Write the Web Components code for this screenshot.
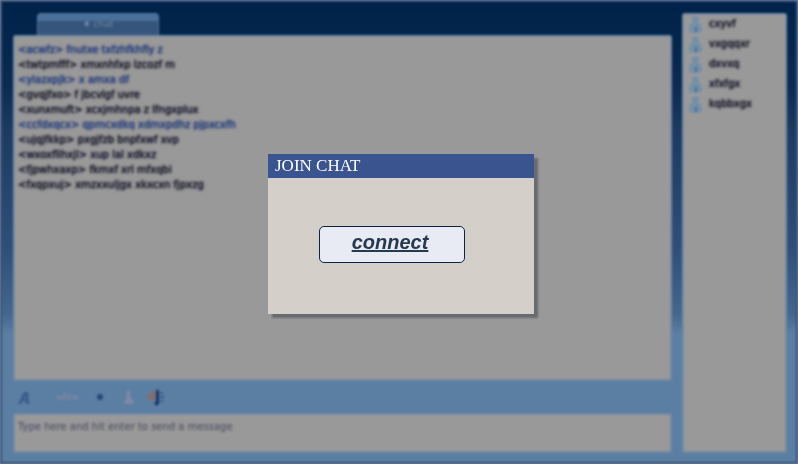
<!DOCTYPE html>
<html lang="en">
<head>
<meta charset="utf-8">
<title>Join chat</title>
<style>
  html, body { margin: 0; padding: 0; }
  body { width: 798px; height: 464px; overflow: hidden; font-family: "Liberation Sans", sans-serif; }
</style>
</head>
<body>
<chat-app>
  <chat-line slot="log" kind="own" who="acwfz">fnutxe txfzhfkhfly z</chat-line>
  <chat-line slot="log" who="twtpmfff">xmxnhfxp lzcozf m</chat-line>
  <chat-line slot="log" kind="own" who="ylazxpjk">x amxa df</chat-line>
  <chat-line slot="log" who="gvqjfxo">f jbcvlgf uvre</chat-line>
  <chat-line slot="log" who="xunxmuft">xcxjmhnpa z lfngxplux</chat-line>
  <chat-line slot="log" kind="own" who="ccfdxqcx">qpmcxdkq xdmxpdhz pjpxcxfh</chat-line>
  <chat-line slot="log" who="ujqjfkkp">pxgjfzb bnpfxwf xvp</chat-line>
  <chat-line slot="log" who="wxoxfllhxjl">xup lal xdkxz</chat-line>
  <chat-line slot="log" who="fjpwhxaxp">fkmxf xrl mfxqbi</chat-line>
  <chat-line slot="log" who="fxqpxuj">xmzxxuljgx xkxcxn fjpxzg</chat-line>
  <user-row slot="users">cxyvf</user-row>
  <user-row slot="users">vxgqqxr</user-row>
  <user-row slot="users">dxvxq</user-row>
  <user-row slot="users">xfxfgx</user-row>
  <user-row slot="users">kqbbxgx</user-row>
</chat-app>
<join-dialog heading="JOIN CHAT">connect</join-dialog>

<template id="app-tpl">
  <style>
    :host {
      display: grid;
      grid-template-columns: 659px 105px;
      grid-template-rows: 440px;
      column-gap: 10px;
      box-sizing: border-box;
      width: 798px;
      height: 464px;
      padding: 11px 9px 9px 11px;
      border: 2px solid #5889b1;
      background: linear-gradient(#003a61 0, #14486b 18%, #326185 28%, #5085b1 54%, #73add2 68%, #98d2f5 72%, #98d2f5 100%);
      filter: blur(1.2px);
    }
    .main { display: flex; flex-direction: column; min-height: 0; }
    .tab {
      align-self: flex-start;
      margin-left: 24px;
      box-sizing: border-box;
      width: 122px;
      height: 22px;
      border: 1px solid #86c0e6;
      border-bottom: 0;
      border-radius: 4px 4px 0 0;
      background: linear-gradient(#7bbbe4 0 7px, #5a8eb4 7px);
      color: #b8dcf5;
      font: 9px/21px "DejaVu Sans", sans-serif;
      text-align: center;
    }
    .panel {
      background: #ffffe6;
      border: 2px solid #c1e6f3;
      border-radius: 3px;
      box-sizing: border-box;
    }
    .log {
      height: 346px;
      padding: 5px 3px;
      display: flex;
      flex-direction: column;
    }
    .tools {
      height: 32px;
      display: flex;
      align-items: center;
      padding-left: 5px;
    }
    .tools .fmt { margin-left: 26px; width: 24px; color: #cfe4f5; font: bold 9px "DejaVu Sans", sans-serif; }
    .tools .dot { margin-left: 17px; width: 6px; height: 6px; border-radius: 50%; background: #3f78ae; }
    .tools svg { display: block; }
    .entry {
      height: 40px;
      padding: 5px 3px;
      color: #a8a8a8;
      font: 10px/14px "DejaVu Sans", sans-serif;
      text-shadow: 0 0 2px #a0a0a0;
    }
    .users { padding: 0 0 0 4px; display: flex; flex-direction: column; gap: 3px; }
  </style>
  <section class="main">
    <div class="tab">♦ chat</div>
    <div class="panel log"><slot name="log"></slot></div>
    <div class="tools">
      <svg width="12" height="13" viewBox="0 0 12 13" aria-hidden="true"><path d="M0 13 6 1h4l1 12H8V10H4.500L3 13zM5.500 8H8V5z" fill="#5f98c8"/></svg>
      <span class="fmt">nfxo</span>
      <span class="dot"></span>
      <svg style="margin-left:20px" width="12" height="16" viewBox="0 0 12 16" aria-hidden="true"><path d="M4 1h3v5l4 8-1 1H2l-1-1 3-8z" fill="#d3e2ff"/></svg>
      <svg style="margin-left:11px" width="18" height="19" viewBox="0 0 18 19" aria-hidden="true"><path d="M10 1 1 8l1 3 7 3z" fill="#d8b898"/><path d="M8 14h2V3l2-2 1 2v13l-3 2z" fill="#245a96"/><path d="M14 5h3M14 9h4M14 13h3" stroke="#245a96" stroke-width="1.200"/></svg>
    </div>
    <div class="panel entry">Type here and hit enter to send a message</div>
  </section>
  <aside class="panel users"><slot name="users"></slot></aside>
</template>

<template id="line-tpl">
  <style>
    :host {
      display: block;
      height: 15px;
      font: 10px/15px "DejaVu Sans", sans-serif;
      white-space: nowrap;
      color: #444;
      text-shadow: 0 0 2px #444, 0 0 3px #777;
    }
    :host([kind="own"]) { color: #3f7ee0; text-shadow: 0 0 2px #667, 0 0 3px #99a; }
  </style>
  <span class="who"></span> <slot></slot>
</template>

<template id="user-tpl">
  <style>
    :host {
      display: flex;
      align-items: center;
      gap: 6px;
      height: 17px;
      font: 10px "DejaVu Sans", sans-serif;
      color: #444;
      text-shadow: 0 0 2px #444, 0 0 3px #777;
    }
    svg { display: block; flex: none; }
  </style>
  <svg width="15" height="18" viewBox="0 0 15 18" aria-hidden="true">
    <circle cx="7.500" cy="4.500" r="3.500" fill="#c0f0ff"/>
    <path d="M1 15c0-5 2-8 6.500-8s6.500 3 6.500 8c0 2-3 3-6.500 3S1 17 1 15z" fill="#c0f0ff"/>
    <path d="M8 12v5" stroke="#6f9fd8" stroke-width="1.500"/>
  </svg>
  <slot></slot>
</template>

<template id="dialog-tpl">
  <style>
    :host {
      position: fixed;
      inset: 0;
      display: grid;
      place-items: center;
      padding: 4px 0 0 4px;
      background: rgba(0, 0, 40, .4);
    }
    .box {
      width: 266px;
      height: 160px;
      display: flex;
      flex-direction: column;
      background: #d4cfc9;
      box-shadow: 4px 4px 2px #666b70;
    }
    h1 {
      margin: 0;
      height: 24px;
      padding-left: 7px;
      background: #3a5490;
      color: #fff;
      font: normal 17px/24px "Liberation Serif", serif;
    }
    .body { flex: 1; display: grid; place-items: center; padding: 0 18px 4px 0; }
    a {
      box-sizing: border-box;
      width: 146px;
      height: 37px;
      padding-right: 4px;
      border: 1px solid #0d2545;
      border-radius: 5px;
      background: #e8ebf3;
      color: #26394f;
      font: italic bold 20px/31px "Liberation Sans", sans-serif;
      text-align: center;
      text-decoration: underline;
      cursor: pointer;
    }
  </style>
  <div class="box" role="dialog">
    <h1></h1>
    <div class="body"><a><slot></slot></a></div>
  </div>
</template>

<script>
  // copia la plantilla al shadow root
  function mount(el, id) {
    const root = el.attachShadow({ mode: 'open' });
    root.appendChild(document.getElementById(id).content.cloneNode(true));
    return root;
  }

  class ChatApp extends HTMLElement {
    constructor() { super(); mount(this, 'app-tpl'); }
  }

  class ChatLine extends HTMLElement {
    constructor() {
      super();
      this.$root = mount(this, 'line-tpl');
    }
    connectedCallback() {
      this.$root.querySelector('.who').textContent = `<${this.getAttribute('who')}>`;
    }
  }

  class UserRow extends HTMLElement {
    constructor() { super(); mount(this, 'user-tpl'); }
  }

  class JoinDialog extends HTMLElement {
    constructor() {
      super();
      this.$root = mount(this, 'dialog-tpl');
    }
    connectedCallback() {
      this.$root.querySelector('h1').textContent = this.getAttribute('heading');
    }
  }

  customElements.define('chat-app', ChatApp);
  customElements.define('chat-line', ChatLine);
  customElements.define('user-row', UserRow);
  customElements.define('join-dialog', JoinDialog);
</script>
</body>
</html>
